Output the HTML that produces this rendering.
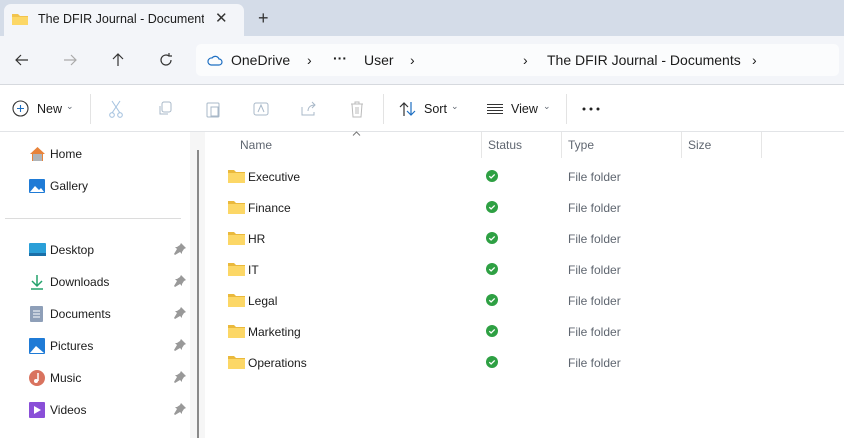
<!DOCTYPE html><html><head><style>
*{margin:0;padding:0;box-sizing:border-box}
body{width:844px;height:438px;overflow:hidden;background:#fff;font-family:"Liberation Sans",sans-serif;font-size:12px;color:#1b1b1b;position:relative}
.a{position:absolute}
.t{position:absolute;white-space:nowrap}
.g{color:#5f6670}
</style></head><body>
<div class="a" style="left:0;top:0;width:844px;height:36px;background:#d4dce8"></div>
<div class="a" style="left:4px;top:4px;width:240px;height:34px;background:#f3f5f9;border-radius:7px 7px 0 0"></div>
<div class="a" style="left:0;top:36px;width:844px;height:48px;background:#f3f5f9"></div>
<div class="a" style="left:196px;top:44px;width:643px;height:32px;background:#fbfcfd;border-radius:5px"></div>
<div class="a" style="left:0;top:84px;width:844px;height:1px;background:#d6d9de"></div>
<div class="a" style="left:0;top:131px;width:844px;height:1px;background:#e2e4e7"></div>
<!-- tab -->
<svg class="a" style="left:11px;top:12px" width="18" height="14"><path d="M1 2h6l2 2h8v9H1z" fill="#f2c44e"/><path d="M1 5h16v8H1z" fill="#fcd766"/></svg>
<div class="t" style="left:38px;top:12px;font-size:12.5px;width:166px;overflow:hidden">The DFIR Journal - Documents</div>
<div class="t" style="left:215px;top:9px;font-size:15px;color:#333">✕</div>
<div class="t" style="left:258px;top:8px;font-size:18px;color:#333">+</div>
<!-- nav -->
<svg class="a" style="left:14px;top:52px" width="16" height="16" fill="none" stroke="#333" stroke-width="1.2"><path d="M14 8H2M7 3L2 8l5 5"/></svg>
<svg class="a" style="left:62px;top:52px" width="16" height="16" fill="none" stroke="#aaa" stroke-width="1.2"><path d="M2 8h12M9 3l5 5-5 5"/></svg>
<svg class="a" style="left:110px;top:52px" width="16" height="16" fill="none" stroke="#333" stroke-width="1.2"><path d="M8 14V2M3 7l5-5 5 5"/></svg>
<svg class="a" style="left:158px;top:52px" width="16" height="16" fill="none" stroke="#333" stroke-width="1.2"><path d="M13 8a5 5 0 1 1-2-4M11 1v3h3"/></svg>
<svg class="a" style="left:207px;top:54px" width="16" height="12" fill="none" stroke="#1e6fc2" stroke-width="1.2"><path d="M4 11h8a3 3 0 0 0 0-6 4 4 0 0 0-7-1A3.5 3.5 0 0 0 4 11z"/></svg>
<div class="t" style="left:231px;top:52px;font-size:14px">OneDrive</div>
<div class="t" style="left:307px;top:52px;font-size:14px">›</div>
<div class="t" style="left:333px;top:50px;font-size:14px;font-weight:bold">···</div>
<div class="t" style="left:364px;top:52px;font-size:14px">User</div>
<div class="t" style="left:410px;top:52px;font-size:14px">›</div>
<div class="t" style="left:523px;top:52px;font-size:14px">›</div>
<div class="t" style="left:547px;top:52px;font-size:14px">The DFIR Journal - Documents</div>
<div class="t" style="left:752px;top:52px;font-size:14px">›</div>
<!-- command bar -->
<svg class="a" style="left:12px;top:100px" width="17" height="17" fill="none" stroke="#333" stroke-width="1.1"><circle cx="8.5" cy="8.5" r="7.5"/><path d="M8.5 5v7M5 8.5h7" stroke="#1e6fc2"/></svg>
<div class="t" style="left:37px;top:102px;font-size:12.5px">New</div>
<div class="t g" style="left:66px;top:101px;font-size:9px">⌄</div>
<div class="a" style="left:90px;top:94px;width:1px;height:30px;background:#e3e3e3"></div>
<svg class="a" style="left:108px;top:100px" width="16" height="18" fill="none" stroke="#a8c4e0" stroke-width="1.1"><path d="M4 1l8 12M12 1L4 13"/><circle cx="4" cy="15" r="2.3"/><circle cx="12" cy="15" r="2.3"/></svg>
<svg class="a" style="left:157px;top:101px" width="16" height="16" fill="none" stroke="#a8b8c8"><rect x="5" y="1" width="9" height="10" rx="2"/><path d="M3 5v8h8"/></svg>
<svg class="a" style="left:205px;top:100px" width="16" height="18" fill="none" stroke="#a8b8c8"><rect x="2" y="3" width="12" height="14" rx="1"/><rect x="6" y="7" width="7" height="9"/></svg>
<svg class="a" style="left:252px;top:100px" width="18" height="18" fill="none" stroke="#a8b8c8"><rect x="2" y="3" width="14" height="12" rx="2"/><path d="M6 12l3-7 3 7"/></svg>
<svg class="a" style="left:300px;top:100px" width="18" height="18" fill="none" stroke="#a8b8c8"><path d="M2 7v8h12v-3M8 11c0-4 3-6 7-6M12 2l3 3-3 3"/></svg>
<svg class="a" style="left:349px;top:100px" width="16" height="18" fill="none" stroke="#bbb"><path d="M2 4h12M6 4V2h4v2M3 4l1 13h8l1-13M7 7v7M9 7v7"/></svg>
<div class="a" style="left:383px;top:94px;width:1px;height:30px;background:#e3e3e3"></div>
<svg class="a" style="left:399px;top:101px" width="18" height="16" fill="none" stroke-width="1.2"><path d="M5 15V2M1 6l4-4 4 4" stroke="#333"/><path d="M12 1v13M8 10l4 4 4-4" stroke="#1e6fc2"/></svg>
<div class="t" style="left:424px;top:102px;font-size:12.5px">Sort</div>
<div class="t g" style="left:451px;top:101px;font-size:9px">⌄</div>
<svg class="a" style="left:487px;top:103px" width="16" height="12" stroke="#333"><path d="M0 1.5h16M0 4.5h16M0 7.5h16M0 10.5h16"/></svg>
<div class="t" style="left:511px;top:102px;font-size:12.5px">View</div>
<div class="t g" style="left:543px;top:101px;font-size:9px">⌄</div>
<div class="a" style="left:566px;top:94px;width:1px;height:30px;background:#e3e3e3"></div>
<svg class="a" style="left:582px;top:107px" width="18" height="4" fill="#222"><circle cx="2" cy="2" r="1.5"/><circle cx="9" cy="2" r="1.5"/><circle cx="16" cy="2" r="1.5"/></svg>
<!-- sidebar -->
<div class="a" style="left:190px;top:132px;width:15px;height:306px;background:#f6f6f6"></div>
<div class="a" style="left:197px;top:150px;width:2px;height:288px;background:#8a8a8a"></div>
<div class="a" style="left:5px;top:218px;width:176px;height:1px;background:#dcdcdc"></div>
<svg class="a" style="left:29px;top:146px" width="17" height="16"><path d="M8.5 1L1 8h2v7h11V8h2z" fill="#e8833a"/><rect x="4" y="8" width="9" height="7" fill="#b0b4b8"/></svg>
<div class="t" style="left:50px;top:147px">Home</div>
<svg class="a" style="left:29px;top:178px" width="16" height="16"><rect x="0" y="1" width="16" height="14" rx="1" fill="#1f7bd6"/><path d="M1 14l5-6 4 4 2-2 3 4z" fill="#fff"/></svg>
<div class="t" style="left:50px;top:179px">Gallery</div>
<svg class="a" style="left:29px;top:243px" width="17" height="13"><rect width="17" height="13" rx="1" fill="#2a9fd8"/><rect y="10" width="17" height="3" fill="#1a6fa8"/></svg>
<div class="t" style="left:50px;top:243px">Desktop</div>
<svg class="a" style="left:30px;top:274px" width="14" height="16" fill="none" stroke="#23a26c" stroke-width="1.5"><path d="M7 1v10M2 7l5 5 5-5M1 15h12"/></svg>
<div class="t" style="left:50px;top:275px">Downloads</div>
<svg class="a" style="left:30px;top:306px" width="13" height="16"><rect width="13" height="16" rx="1" fill="#8e9fb8"/><path d="M3 5h7M3 8h7M3 11h7" stroke="#fff"/></svg>
<div class="t" style="left:50px;top:307px">Documents</div>
<svg class="a" style="left:29px;top:338px" width="16" height="16"><rect width="16" height="16" rx="1" fill="#1f7bd6"/><path d="M1 15l6-7 8 7z" fill="#fff"/></svg>
<div class="t" style="left:50px;top:339px">Pictures</div>
<svg class="a" style="left:29px;top:370px" width="16" height="16"><circle cx="8" cy="8" r="8" fill="#d9735f"/><path d="M9 3v8" stroke="#fff" stroke-width="1.5"/><circle cx="7" cy="11" r="2" fill="#fff"/></svg>
<div class="t" style="left:50px;top:371px">Music</div>
<svg class="a" style="left:29px;top:402px" width="16" height="16"><rect width="16" height="16" rx="1" fill="#8a4fd8"/><path d="M5 4l7 4-7 4z" fill="#fff"/></svg>
<div class="t" style="left:50px;top:403px">Videos</div>
<svg class="a" style="left:174px;top:243px" width="12" height="12" fill="#999"><path d="M7 0l5 5-2 1-2 3v2L6 9 1 12 0 11l3-5-2-2h2l3-2z"/></svg>
<svg class="a" style="left:174px;top:275px" width="12" height="12" fill="#999"><path d="M7 0l5 5-2 1-2 3v2L6 9 1 12 0 11l3-5-2-2h2l3-2z"/></svg>
<svg class="a" style="left:174px;top:307px" width="12" height="12" fill="#999"><path d="M7 0l5 5-2 1-2 3v2L6 9 1 12 0 11l3-5-2-2h2l3-2z"/></svg>
<svg class="a" style="left:174px;top:339px" width="12" height="12" fill="#999"><path d="M7 0l5 5-2 1-2 3v2L6 9 1 12 0 11l3-5-2-2h2l3-2z"/></svg>
<svg class="a" style="left:174px;top:371px" width="12" height="12" fill="#999"><path d="M7 0l5 5-2 1-2 3v2L6 9 1 12 0 11l3-5-2-2h2l3-2z"/></svg>
<svg class="a" style="left:174px;top:403px" width="12" height="12" fill="#999"><path d="M7 0l5 5-2 1-2 3v2L6 9 1 12 0 11l3-5-2-2h2l3-2z"/></svg>
<!-- headers -->
<div class="t g" style="left:240px;top:138px">Name</div>
<svg class="a" style="left:352px;top:131px" width="9" height="5" fill="none" stroke="#777"><path d="M1 4.5l3.5-3.5 3.5 3.5"/></svg>
<div class="a" style="left:481px;top:132px;width:1px;height:26px;background:#e6e6e6"></div>
<div class="a" style="left:561px;top:132px;width:1px;height:26px;background:#e6e6e6"></div>
<div class="a" style="left:681px;top:132px;width:1px;height:26px;background:#e6e6e6"></div>
<div class="a" style="left:761px;top:132px;width:1px;height:26px;background:#e6e6e6"></div>
<div class="t g" style="left:488px;top:138px">Status</div>
<div class="t g" style="left:568px;top:138px">Type</div>
<div class="t g" style="left:688px;top:138px">Size</div>
<!-- rows -->
<svg class="a" style="left:228px;top:169px" width="17" height="14"><path d="M0 1h6l2 2h9v11H0z" fill="#eab93c"/><path d="M0 4h17v10H0z" fill="#fcd766"/></svg><div class="t" style="left:248px;top:170px">Executive</div><svg class="a" style="left:486px;top:170px" width="12" height="12"><circle cx="6" cy="6" r="6" fill="#2ea043"/><path d="M3.3 6.2l1.8 1.8 3.6-3.6" stroke="#fff" fill="none" stroke-width="1.3"/></svg><div class="t g" style="left:568px;top:170px">File folder</div>
<svg class="a" style="left:228px;top:200px" width="17" height="14"><path d="M0 1h6l2 2h9v11H0z" fill="#eab93c"/><path d="M0 4h17v10H0z" fill="#fcd766"/></svg><div class="t" style="left:248px;top:201px">Finance</div><svg class="a" style="left:486px;top:201px" width="12" height="12"><circle cx="6" cy="6" r="6" fill="#2ea043"/><path d="M3.3 6.2l1.8 1.8 3.6-3.6" stroke="#fff" fill="none" stroke-width="1.3"/></svg><div class="t g" style="left:568px;top:201px">File folder</div>
<svg class="a" style="left:228px;top:231px" width="17" height="14"><path d="M0 1h6l2 2h9v11H0z" fill="#eab93c"/><path d="M0 4h17v10H0z" fill="#fcd766"/></svg><div class="t" style="left:248px;top:232px">HR</div><svg class="a" style="left:486px;top:232px" width="12" height="12"><circle cx="6" cy="6" r="6" fill="#2ea043"/><path d="M3.3 6.2l1.8 1.8 3.6-3.6" stroke="#fff" fill="none" stroke-width="1.3"/></svg><div class="t g" style="left:568px;top:232px">File folder</div>
<svg class="a" style="left:228px;top:262px" width="17" height="14"><path d="M0 1h6l2 2h9v11H0z" fill="#eab93c"/><path d="M0 4h17v10H0z" fill="#fcd766"/></svg><div class="t" style="left:248px;top:263px">IT</div><svg class="a" style="left:486px;top:263px" width="12" height="12"><circle cx="6" cy="6" r="6" fill="#2ea043"/><path d="M3.3 6.2l1.8 1.8 3.6-3.6" stroke="#fff" fill="none" stroke-width="1.3"/></svg><div class="t g" style="left:568px;top:263px">File folder</div>
<svg class="a" style="left:228px;top:293px" width="17" height="14"><path d="M0 1h6l2 2h9v11H0z" fill="#eab93c"/><path d="M0 4h17v10H0z" fill="#fcd766"/></svg><div class="t" style="left:248px;top:294px">Legal</div><svg class="a" style="left:486px;top:294px" width="12" height="12"><circle cx="6" cy="6" r="6" fill="#2ea043"/><path d="M3.3 6.2l1.8 1.8 3.6-3.6" stroke="#fff" fill="none" stroke-width="1.3"/></svg><div class="t g" style="left:568px;top:294px">File folder</div>
<svg class="a" style="left:228px;top:324px" width="17" height="14"><path d="M0 1h6l2 2h9v11H0z" fill="#eab93c"/><path d="M0 4h17v10H0z" fill="#fcd766"/></svg><div class="t" style="left:248px;top:325px">Marketing</div><svg class="a" style="left:486px;top:325px" width="12" height="12"><circle cx="6" cy="6" r="6" fill="#2ea043"/><path d="M3.3 6.2l1.8 1.8 3.6-3.6" stroke="#fff" fill="none" stroke-width="1.3"/></svg><div class="t g" style="left:568px;top:325px">File folder</div>
<svg class="a" style="left:228px;top:355px" width="17" height="14"><path d="M0 1h6l2 2h9v11H0z" fill="#eab93c"/><path d="M0 4h17v10H0z" fill="#fcd766"/></svg><div class="t" style="left:248px;top:356px">Operations</div><svg class="a" style="left:486px;top:356px" width="12" height="12"><circle cx="6" cy="6" r="6" fill="#2ea043"/><path d="M3.3 6.2l1.8 1.8 3.6-3.6" stroke="#fff" fill="none" stroke-width="1.3"/></svg><div class="t g" style="left:568px;top:356px">File folder</div>
</body></html>
